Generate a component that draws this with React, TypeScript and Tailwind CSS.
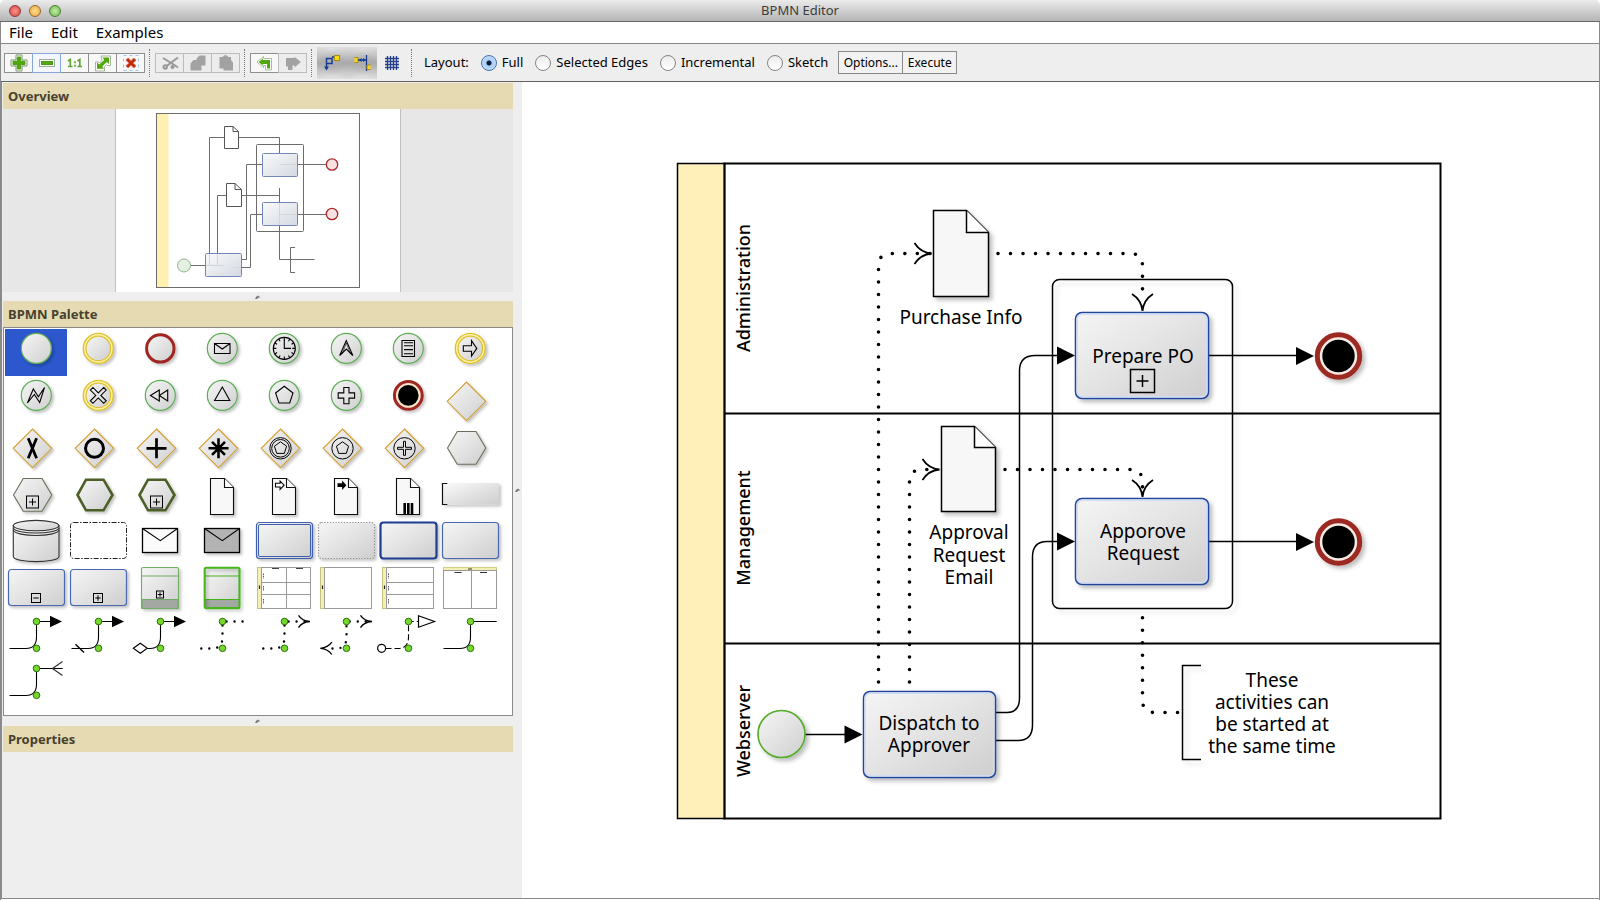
import { useState } from "react";
import type { ReactNode } from "react";

/* ---------- shared drawing parts ---------- */

function SharedDefs() {
  return (
    <svg className="absolute h-0 w-0" aria-hidden="true">
      <defs>
        <linearGradient id="face" x1="0" y1="0" x2="1" y2="1">
          <stop offset="0" stopColor="#f5f5f5" />
          <stop offset="0.45" stopColor="#e5e5e5" />
          <stop offset="1" stopColor="#cecece" />
        </linearGradient>
        <linearGradient id="faceFade" x1="0" y1="0" x2="1" y2="1">
          <stop offset="0" stopColor="#fafafa" />
          <stop offset="1" stopColor="#cdcdcd" />
        </linearGradient>
        <linearGradient id="mini" x1="0" y1="0" x2="1" y2="1">
          <stop offset="0" stopColor="#fafafa" />
          <stop offset="1" stopColor="#d3d9e2" />
        </linearGradient>
        <filter id="shadow" x="-20%" y="-20%" width="150%" height="150%">
          <feDropShadow dx="3" dy="3" stdDeviation="2" floodColor="#000" floodOpacity="0.26" />
        </filter>
        <filter id="softShadow" x="-20%" y="-20%" width="150%" height="150%">
          <feDropShadow dx="4" dy="4" stdDeviation="2" floodColor="#000" floodOpacity="0.12" />
        </filter>
        <filter id="smallShadow" x="-20%" y="-20%" width="160%" height="160%">
          <feDropShadow dx="2" dy="2" stdDeviation="1.4" floodColor="#000" floodOpacity="0.24" />
        </filter>
      </defs>
    </svg>
  );
}

type Pt = { x: number; y: number };

function OpenArrow({ x, y, angle = 0 }: Pt & { angle?: number }) {
  return (
    <path
      transform={`translate(${x} ${y}) rotate(${angle})`}
      d="M-17 -10.5 Q-11 -1 0 0 Q-11 1 -17 10.5"
      fill="none"
      stroke="#000"
      strokeWidth="1.8"
    />
  );
}

function SolidArrow({ x, y }: Pt) {
  return <path d={`M${x} ${y} l-18 -9 v18 Z`} fill="#000" />;
}

function Task({ x, y, w, h }: Pt & { w: number; h: number }) {
  return (
    <g>
      <rect x={x} y={y} width={w} height={h} rx="6.5" fill="url(#face)" stroke="#21449c" strokeWidth="1.5" filter="url(#shadow)" />
      <rect x={x + 1.7} y={y + 1.7} width={w - 3.4} height={h - 3.4} rx="5" fill="none" stroke="#cfdef6" strokeWidth="1.4" />
    </g>
  );
}

function Document({ x, y, w, h, fold }: Pt & { w: number; h: number; fold: number }) {
  return (
    <g stroke="#000" strokeWidth="1.5" strokeLinejoin="miter">
      <path d={`M${x} ${y} h${w - fold} l${fold} ${fold} v${h - fold} h${-w} Z`} fill="#f7f7f7" filter="url(#shadow)" />
      <path d={`M${x + w - fold} ${y} v${fold} h${fold}`} fill="#fff" />
    </g>
  );
}

function EndEvent({ x, y }: Pt) {
  return (
    <g>
      <circle cx={x} cy={y} r="21.2" fill="#f7e9e4" stroke="#9c2a20" strokeWidth="5" filter="url(#shadow)" />
      <circle cx={x} cy={y} r="16.2" fill="#000" />
    </g>
  );
}

function Label({ x, lines }: { x: number; lines: [string, number][] }) {
  return (
    <>
      {lines.map(([text, y]) => (
        <text key={text} x={x} y={y} textAnchor="middle" className="fill-black text-[19px]">
          {text}
        </text>
      ))}
    </>
  );
}

function LaneLabel({ y, text }: { y: number; text: string }) {
  return (
    <text transform={`translate(750 ${y}) rotate(-90)`} textAnchor="middle" className="fill-black text-[18px] font-medium">
      {text}
    </text>
  );
}

/* ---------- diagram canvas ---------- */

function Diagram() {
  return (
    <svg width="1076" height="814" viewBox="522 83 1076 814" className="block" role="img" aria-label="Purchase approval process">
      <rect x="677.5" y="163.5" width="47" height="655" fill="#fff0b9" stroke="#000" strokeWidth="1.5" />
      <rect x="724.5" y="163.5" width="716" height="655" fill="none" stroke="#000" strokeWidth="2" />
      <path d="M724.5 413.5 H1440.5 M724.5 643.5 H1440.5" stroke="#000" strokeWidth="2" />

      <LaneLabel y={288} text="Administration" />
      <LaneLabel y={528} text="Management" />
      <LaneLabel y={731} text="Webserver" />

      <rect x="1052.5" y="279.5" width="180" height="329" rx="7" fill="none" stroke="#000" strokeWidth="1.5" filter="url(#softShadow)" />

      <g fill="none" stroke="#000" strokeWidth="3.6" strokeLinecap="round" strokeDasharray="0 12.5">
        <path d="M878.5 682 V266 Q878.5 253.5 891 253.5 H931" />
        <path d="M909.5 682 V482 Q909.5 469.5 922 469.5 H938" />
        <path d="M998 253.5 H1130 Q1142.5 253.5 1142.5 266 V300" />
        <path d="M1005 469.5 H1130 Q1142.5 469.5 1142.5 482 V490" />
        <path d="M1142.5 617.7 V700 Q1142.5 712.5 1155 712.5 H1181" />
      </g>

      <g fill="none" stroke="#000" strokeWidth="1.5">
        <path d="M805 734.5 H848" />
        <path d="M996 712.5 H1007 Q1019.5 712.5 1019.5 698 V371 Q1019.5 355.5 1035 355.5 H1060" />
        <path d="M996 740.5 H1018 Q1032.5 740.5 1032.5 725 V557 Q1032.5 541.5 1047 541.5 H1060" />
        <path d="M1209 355.5 H1300 M1209 541.5 H1300" />
      </g>

      <Task x={1075.5} y={312.5} w={133} h={86} />
      <Task x={1075.5} y={498.5} w={133} h={86} />
      <Task x={863.5} y={691.5} w={132} h={86} />

      <circle cx="781.5" cy="734" r="23.5" fill="url(#face)" stroke="#52ab25" strokeWidth="1.6" filter="url(#shadow)" />
      <EndEvent x={1338.5} y={356} />
      <EndEvent x={1338.5} y={542} />

      <Document x={933.5} y={210.5} w={55} h={86} fold={22} />
      <Document x={941.5} y={426.5} w={54} h={85} fold={21} />

      <SolidArrow x={1075} y={355.5} />
      <SolidArrow x={1075} y={541.5} />
      <SolidArrow x={1314} y={356} />
      <SolidArrow x={1314} y={542} />
      <SolidArrow x={862.5} y={734.5} />
      <OpenArrow x={931.5} y={253.5} />
      <OpenArrow x={939.5} y={469.5} />
      <OpenArrow x={1142.5} y={311} angle={90} />
      <OpenArrow x={1142.5} y={497} angle={90} />

      <g fill="none" stroke="#000" strokeWidth="1.5">
        <rect x="1130.5" y="369.5" width="24" height="23" />
        <path d="M1136.5 381 h12 M1142.5 375 v12" />
        <path d="M1201 665.5 H1182.5 V759.5 H1201" filter="url(#softShadow)" />
      </g>

      <Label x={961} lines={[["Purchase Info", 324]]} />
      <Label x={969} lines={[["Approval", 539], ["Request", 562], ["Email", 584]]} />
      <Label x={1143} lines={[["Prepare PO", 363]]} />
      <Label x={1143} lines={[["Apporove", 538], ["Request", 560]]} />
      <Label x={929} lines={[["Dispatch to", 730], ["Approver", 752]]} />
      <Label x={1272} lines={[["These", 687], ["activities can", 709], ["be started at", 731], ["the same time", 753]]} />
    </svg>
  );
}

/* ---------- overview thumbnail ---------- */

function Overview() {
  return (
    <div className="border-x border-[#c0c0c0] bg-white">
      <svg width="284" height="183" viewBox="116 109 284 183" className="block" role="img" aria-label="Diagram overview">
        <rect x="157" y="114" width="11.5" height="173" fill="#fdf0b0" />
        <g fill="none" stroke="#6c6c6c" strokeWidth="1">
          <rect x="156.5" y="113.5" width="203" height="174" />
          <rect x="256.5" y="144.5" width="47" height="87" rx="1" />
          <path d="M224 137.5 H209.5 V254 M238.5 137.5 H279.5 V153 M226 195.5 H217.5 V254 M241.5 195.5 H279.5 M279.5 188 V202" />
          <path d="M190 265.5 H205 M241.5 259.5 H246.5 V164.5 H262 M241.5 267.5 H250.5 V214.5 H262 M298 164.5 H327 M298 214.5 H327" />
          <path d="M279.5 226 V259.5 H314.5 M295 247.5 H290.5 V272.5 H295" />
        </g>
        <g fill="url(#mini)" stroke="#7386b8" strokeWidth="1">
          <rect x="262.5" y="153.5" width="35" height="23" rx="1" />
          <rect x="262.5" y="202.5" width="35" height="23" rx="1" />
          <rect x="205.5" y="253.5" width="36" height="23" rx="1" />
        </g>
        <g fill="none" stroke="#d2d5da" strokeWidth="1">
          <path d="M279.5 164.5 H297 M279.5 214.5 H297 M279.5 203 V225 M209.5 254 V265 M217.5 254 V265 M206 265.5 H224 M233 267.5 H241" />
        </g>
        <g fill="#fff" stroke="#555" strokeWidth="1">
          <path d="M224.5 126.5 h8.5 l5.5 5 v17 h-14 Z M233 126.5 v5 h5.5" />
          <path d="M226.5 183.5 h8.5 l6.5 6 v17 h-15 Z M235 183.5 v6 h6.5" />
        </g>
        <circle cx="184" cy="265.5" r="6.5" fill="#e3f0e2" stroke="#8fb48d" />
        <circle cx="332" cy="164.5" r="5.7" fill="#f6e2e2" stroke="#b3262b" strokeWidth="1.3" />
        <circle cx="332" cy="214" r="5.7" fill="#f6e2e2" stroke="#b3262b" strokeWidth="1.3" />
      </svg>
    </div>
  );
}

/* ---------- palette glyphs, drawn in a 62 x 47 cell ---------- */

const C = { x: 31.3, y: 19.4 };

function Ring({ kind, children }: { kind: "start" | "inter" | "end"; children?: ReactNode }) {
  return (
    <>
      {kind === "start" && <circle cx={C.x} cy={C.y} r="15" fill="url(#face)" stroke="#5fae57" strokeWidth="1.2" filter="url(#smallShadow)" />}
      {kind === "inter" && (
        <>
          <circle cx={C.x} cy={C.y} r="15" fill="#fbf4a8" stroke="#dfc030" strokeWidth="1.4" filter="url(#smallShadow)" />
          <circle cx={C.x} cy={C.y} r="12.3" fill="url(#face)" stroke="#dfc030" strokeWidth="1.2" />
        </>
      )}
      {kind === "end" && <circle cx={C.x} cy={C.y} r="13.7" fill="url(#face)" stroke="#9f2823" strokeWidth="3" filter="url(#smallShadow)" />}
      <g fill="none" stroke="#000" strokeWidth="1.1">{children}</g>
    </>
  );
}

function Diamond({ children }: { children?: ReactNode }) {
  return (
    <>
      <path d="M27.5 6 L46.8 25.3 L27.5 44.6 L8.2 25.3 Z" fill="url(#face)" stroke="#d2a031" strokeWidth="1.1" filter="url(#smallShadow)" />
      <g fill="none" stroke="#000">{children}</g>
    </>
  );
}

function Hexagon({ thick, marker }: { thick?: boolean; marker?: boolean }) {
  return (
    <>
      {thick ? (
        <path d="M10.5 25 L19 9.7 H36.5 L45.5 25 L36.5 40.3 H19 Z" fill="url(#face)" stroke="#4b5f26" strokeWidth="2.6" filter="url(#smallShadow)" />
      ) : (
        <path d="M8.5 25 L18.3 8.5 H37 L46.8 25 L37 41.3 H18.3 Z" fill="url(#face)" stroke="#66705a" strokeWidth="1.1" filter="url(#smallShadow)" />
      )}
      {marker && <Marker x={27.5} y={32} s={12} />}
    </>
  );
}

function Marker({ x, y, s, minus }: Pt & { s: number; minus?: boolean }) {
  const h = s / 2;
  const a = s / 4 + 0.5;
  return (
    <g fill="none" stroke="#000" strokeWidth="1">
      <rect x={x - h} y={y - h} width={s} height={s} />
      <path d={`M${x - a} ${y} h${2 * a}`} />
      {!minus && <path d={`M${x} ${y - a} v${2 * a}`} />}
    </g>
  );
}

function Doc({ children }: { children?: ReactNode }) {
  return (
    <>
      <path d="M19.5 8.5 H33.5 L42.5 17.5 V44.5 H19.5 Z" fill="#f8f8f8" stroke="#111" strokeWidth="1.1" filter="url(#smallShadow)" />
      <path d="M33.5 8.5 V17.5 H42.5" fill="#fff" stroke="#111" strokeWidth="1.1" />
      {children}
    </>
  );
}

function Card({ stroke, width = 1.2, dash, fill = "url(#face)" }: { stroke: string; width?: number; dash?: string; fill?: string }) {
  return (
    <rect x="3.5" y="5.5" width="56" height="36" rx="3" fill={fill} stroke={stroke} strokeWidth={width} strokeDasharray={dash} filter={fill === "#fff" ? undefined : "url(#smallShadow)"} />
  );
}

function Envelope({ fill }: { fill: string }) {
  return (
    <>
      <rect x="13.5" y="11.5" width="35" height="24" fill={fill} stroke="#000" strokeWidth="1.3" filter="url(#smallShadow)" />
      <path d="M13.5 11.5 L31.3 23.7 L48.5 11.5" fill="none" stroke="#000" strokeWidth="1.1" />
    </>
  );
}

function Nodes() {
  return (
    <g fill="#76d82c" stroke="#2f6f10" strokeWidth="1">
      <circle cx="31.5" cy="10.5" r="3.3" />
      <circle cx="31.5" cy="37.3" r="3.3" />
    </g>
  );
}

function Wire({ dash, from = 4.5, to = 46, width = 1.1, round }: { dash?: string; from?: number; to?: number; width?: number; round?: boolean }) {
  return (
    <path
      d={`M${from} 37.5 H21 Q31.5 37.5 31.5 26 V10.5 H${to}`}
      fill="none"
      stroke="#000"
      strokeWidth={width}
      strokeDasharray={dash}
      strokeLinecap={round ? "round" : "butt"}
    />
  );
}

const TIP = "M45 4.8 L57 10.5 L45 16.2 Z";
const OPEN_TIP = "M45.5 4.3 Q49 10 57 10.5 Q49 11 45.5 16.7";
const PENTAGON = "M31.3 10.3 L40 17 L36.7 27 H26 L22.6 17 Z";

function Pool({ columns, rows }: { columns?: boolean; rows?: boolean }) {
  const left = rows && columns ? 4.5 : 5.5;
  return (
    <g strokeWidth="1">
      <rect x={left} y="3.5" width="4" height="41" fill="#f5efb4" stroke="#c9c27e" />
      <rect x={left + 4} y="3.5" width={columns ? 49 : 47} height="41" fill="#fff" stroke="#9a9a9a" />
      {rows && <path d={`M${left + 4} 18.5 h${columns ? 49 : 47} M${left + 4} 30.5 h${columns ? 49 : 47}`} stroke="#9a9a9a" />}
      {columns && <path d="M33.5 3.5 V44.5" stroke="#9a9a9a" />}
      {columns && <path d="M19 4.5 h7 M43 4.5 h7" stroke="#444" />}
      {rows && <path d={`M${left + 6} 9.5 v5 M${left + 6} 22 v5 M${left + 6} 35 v5`} stroke="#555" strokeDasharray="1.5 0.8" />}
      <path d={`M${left + 2} 21.5 v3.5`} stroke="#222" strokeWidth="1.2" />
    </g>
  );
}

const PALETTE: [string, ReactNode][] = [
  ["Start event", <Ring kind="start" />],
  ["Intermediate event", <Ring kind="inter" />],
  ["End event", <Ring kind="end" />],
  ["Message event", <Ring kind="start"><path d="M23.5 14.5 h15.5 v10 h-15.5 Z l7.8 5.5 l7.7 -5.5" /></Ring>],
  ["Timer event", (
    <Ring kind="start">
      <circle cx="31.3" cy="19.4" r="11" />
      <path d="M31.3 11 V19.4 H38" />
      <path d="M31.3 8.4 v3 M31.3 27.4 v3 M20.3 19.4 h3 M42.3 19.4 h-3 M25.8 9.9 l1.3 2.3 M36.8 9.9 l-1.3 2.3 M25.8 28.9 l1.3 -2.3 M36.8 28.9 l-1.3 -2.3 M21.8 13.9 l2.3 1.3 M40.8 13.9 l-2.3 1.3 M21.8 24.9 l2.3 -1.3 M40.8 24.9 l-2.3 -1.3" />
    </Ring>
  )],
  ["Escalation event", <Ring kind="start"><path d="M31.3 11.5 L24.7 26.5 L31.3 20 L37.8 26.5 Z" /><path d="M31.3 14 L27 25 M31.3 14 L35.6 25" strokeWidth="0.6" /></Ring>],
  ["Rule event", <Ring kind="start"><path d="M25 11.5 h12.5 v16 h-12.5 Z M27 13.8 h9 M27 16.8 h9 M27 20.6 h9 M27 24.8 h9" /></Ring>],
  ["Link event", <Ring kind="inter"><path d="M24.3 16.7 H32.5 V11.6 L37.8 19.4 L32.5 27 V22.3 H24.3 Z" /></Ring>],

  ["Error event", <Ring kind="start"><path d="M22.4 27 L28.3 13 L33.4 20.7 L39.5 11.5 L34.7 26.5 L29.3 18.5 Z" /></Ring>],
  ["Cancel event", <Ring kind="inter"><path transform="rotate(45 31.3 19.4)" d="M29.5 10 h3.6 v7.6 h7.6 v3.6 h-7.6 v7.6 h-3.6 v-7.6 h-7.6 v-3.6 h7.6 Z" /></Ring>],
  ["Compensation event", <Ring kind="start"><path d="M30.3 14 L21.5 19.5 L30.3 25 Z M38.7 14 L30.3 19.5 L38.7 25 Z" /></Ring>],
  ["Signal event", <Ring kind="start"><path d="M31.3 11 L38.8 24.5 H23.6 Z" /></Ring>],
  ["Multiple event", <Ring kind="start"><path d={PENTAGON} /></Ring>],
  ["Parallel event", <Ring kind="start"><path d="M28.8 11.5 h5.2 v5.4 h5.6 v5.2 h-5.6 v5.6 h-5.2 v-5.6 h-5.6 v-5.2 h5.6 Z" /></Ring>],
  ["Terminate event", (
    <>
      <circle cx={C.x} cy={C.y} r="13.9" fill="#f9e6c8" stroke="#9f2823" strokeWidth="3" filter="url(#smallShadow)" />
      <circle cx={C.x} cy={C.y} r="10.3" fill="#000" />
    </>
  )],
  ["Gateway", <Diamond />],

  ["Exclusive gateway", <Diamond><path d="M23.2 15.3 L31.6 35.3 M31.6 15.3 L23.2 35.3" strokeWidth="2.8" /></Diamond>],
  ["Inclusive gateway", <Diamond><circle cx="27.5" cy="25.3" r="9" strokeWidth="3" /></Diamond>],
  ["Parallel gateway", <Diamond><path d="M27.5 15.3 v20 M17.5 25.3 h20" strokeWidth="2.7" /></Diamond>],
  ["Complex gateway", <Diamond><path d="M27.5 15.3 v20 M17.5 25.3 h20 M21 18.8 l13 13 M34 18.8 l-13 13" strokeWidth="2.6" /></Diamond>],
  ["Event gateway", (
    <Diamond>
      <circle cx="27.5" cy="25.3" r="10.7" />
      <circle cx="27.5" cy="25.3" r="8.8" />
      <path d="M27.5 18.8 L33.6 23.2 L31.3 30.4 H23.7 L21.4 23.2 Z" />
    </Diamond>
  )],
  ["Exclusive event gateway", (
    <Diamond>
      <circle cx="27.5" cy="25.3" r="10.7" />
      <path d="M27.5 18.8 L33.6 23.2 L31.3 30.4 H23.7 L21.4 23.2 Z" />
    </Diamond>
  )],
  ["Parallel event gateway", (
    <Diamond>
      <circle cx="27.5" cy="25.3" r="10.7" />
      <path d="M26.5 18.3 h2 v6 h6 v2 h-6 v6 h-2 v-6 h-6 v-2 h6 Z" />
    </Diamond>
  )],
  ["Conversation", <Hexagon />],

  ["Sub conversation", <Hexagon marker />],
  ["Call conversation", <Hexagon thick />],
  ["Call sub conversation", <Hexagon thick marker />],
  ["Data object", <Doc />],
  ["Data input", <Doc><path d="M22.5 13.3 h4.6 v-2.3 l4 4.2 l-4 4.2 v-2.4 h-4.6 Z" fill="#fff" stroke="#000" strokeWidth="1.1" /></Doc>],
  ["Data output", <Doc><path d="M22.5 13.3 h4.6 v-2.8 l4.3 4.7 l-4.3 4.7 v-2.9 h-4.6 Z" fill="#000" /></Doc>],
  ["Data collection", <Doc><path d="M27.7 33 v11 M31.3 33 v11 M35 33 v11" stroke="#000" strokeWidth="2.6" /></Doc>],
  ["Annotation", (
    <>
      <rect x="3.5" y="13" width="56.5" height="21.5" rx="1" fill="url(#faceFade)" filter="url(#smallShadow)" />
      <path d="M8.3 13.5 H3.5 V34.5 H8.3" fill="none" stroke="#111" strokeWidth="1.2" />
    </>
  )],

  ["Data store", (
    <g fill="url(#face)" stroke="#333" strokeWidth="1.1">
      <path d="M8.3 8.5 V39.5 C8.3 46.3 54 46.3 54 39.5 V8.5 Z" filter="url(#smallShadow)" />
      <ellipse cx="31.1" cy="8.6" rx="22.8" ry="5.2" />
      <path d="M8.3 10.8 C10 17.8 52 17.8 54 10.8 M8.3 13.2 C10 20.2 52 20.2 54 13.2" fill="none" />
    </g>
  )],
  ["Group", <Card stroke="#222" fill="#fff" width={1} dash="5 1.5 1.5 1.5" />],
  ["Message", <Envelope fill="#fbfbfb" />],
  ["Reply message", <Envelope fill="#b3b3b3" />],
  ["Transaction", <><Card stroke="#3f5fae" /><rect x="5.5" y="7.5" width="52" height="32" rx="1.5" fill="none" stroke="#3f5fae" /></>],
  ["Event sub process", <Card stroke="#8c8c8c" width={1.2} dash="1.2 1.6" />],
  ["Call activity", <Card stroke="#1f3d92" width={2.2} />],
  ["Task", <Card stroke="#4a68b2" />],

  ["Expanded sub process", <><Card stroke="#4a68b2" /><Marker x={31} y={34} s={9} minus /></>],
  ["Collapsed sub process", <><Card stroke="#4a68b2" /><Marker x={31} y={34} s={9} /></>],
  ["Choreography", (
    <g stroke="#6fae62" strokeWidth="1.1">
      <rect x="12.5" y="3.5" width="37" height="41" rx="1.5" fill="url(#face)" filter="url(#smallShadow)" />
      <path d="M13 35.5 h36 v9 h-36 Z" fill="#a3a8a3" />
      <path d="M13 12 H49.5" />
      <Marker x={31} y={30.5} s={7} />
    </g>
  )],
  ["Call choreography", (
    <g stroke="#46b51d">
      <path d="M14 4 h34 v40 h-34 Z" fill="url(#face)" stroke="none" />
      <path d="M14 35.5 h34.5 v8.5 h-34.5 Z" fill="#a3a8a3" strokeWidth="1" />
      <path d="M14 12 H48" strokeWidth="1" />
      <rect x="13.7" y="3.8" width="34.8" height="40.3" rx="1.5" fill="none" strokeWidth="2.1" filter="url(#smallShadow)" />
    </g>
  )],
  ["Pool with lanes and columns", <Pool rows columns />],
  ["Pool", <Pool />],
  ["Pool with lanes", <Pool rows />],
  ["Vertical pool", (
    <g strokeWidth="1">
      <rect x="4.5" y="3.5" width="53" height="3" fill="#f5efb4" stroke="#d3cc86" />
      <rect x="4.5" y="6.5" width="53" height="38" fill="#fff" stroke="#9a9a9a" />
      <path d="M32.5 6.5 V44.5" stroke="#9a9a9a" />
      <path d="M29 5 h4 M15.5 8.5 h7 M41 8.5 h7" stroke="#333" />
    </g>
  )],

  ["Sequence flow", <><Wire /><path d={TIP} /><Nodes /></>],
  ["Default flow", <><Wire /><path d="M8.5 33.3 L17 41.5" stroke="#000" strokeWidth="1.4" /><path d={TIP} /><Nodes /></>],
  ["Conditional flow", <><Wire from={18} /><path d="M4.3 37.3 L11.3 32.3 L18.3 37.3 L11.3 42.3 Z" fill="#fff" stroke="#000" strokeWidth="1.1" /><path d={TIP} /><Nodes /></>],
  ["Association", <><Wire from={10.3} to={56} dash="0 8" width={2.4} round /><Nodes /></>],
  ["Directed association", <><Wire from={10.3} to={53} dash="0 8" width={2.4} round /><path d={OPEN_TIP} fill="none" stroke="#000" strokeWidth="1.3" /><Nodes /></>],
  ["Bidirected association", (
    <>
      <Wire from={17.5} to={53} dash="0 8" width={2.4} round />
      <path d={OPEN_TIP} fill="none" stroke="#000" strokeWidth="1.3" />
      <path d="M16.8 31.2 Q13 36.8 5.3 37.3 Q13 37.8 16.8 43.5" fill="none" stroke="#000" strokeWidth="1.3" />
      <Nodes />
    </>
  )],
  ["Message flow", (
    <>
      <Wire from={8.5} to={41} dash="6 3" />
      <circle cx="4.6" cy="37.3" r="4" fill="#fff" stroke="#000" strokeWidth="1.2" />
      <path d="M41.5 4.8 L57.5 10.5 L41.5 16.2 Z" fill="#fff" stroke="#000" strokeWidth="1.2" />
      <Nodes />
    </>
  )],
  ["Conversation link", <><Wire to={57.7} /><Nodes /></>],

  ["Forked conversation link", <><Wire to={57.7} /><path d="M57.5 3.5 L47.5 10.5 L57.5 17.5" fill="none" stroke="#333" strokeWidth="1.2" /><Nodes /></>],
];

function Palette() {
  const [selected, setSelected] = useState(0);
  return (
    <div className="grid grid-cols-[repeat(8,62px)] border border-[#8a8a8a] bg-white px-px pt-px pb-2.5">
      {PALETTE.map(([name, glyph], i) => (
        <button
          key={name}
          type="button"
          aria-label={name}
          aria-pressed={i === selected}
          onClick={() => setSelected(i)}
          className={i === selected ? "h-[47px] bg-[#2c57cd]" : "h-[47px]"}
        >
          <svg width="62" height="47" viewBox="0 0 62 47" className="block overflow-visible">{glyph}</svg>
        </button>
      ))}
    </div>
  );
}

/* ---------- toolbar ---------- */

function ToolGroup({ items }: { items: { name: string; icon: ReactNode; disabled?: boolean; hot?: boolean }[] }) {
  return (
    <div className="flex">
      {items.map(({ name, icon, disabled, hot }) => (
        <button
          key={name}
          type="button"
          aria-label={name}
          disabled={disabled}
          className={
            hot
              ? "z-10 -ml-px flex h-5 w-[29px] items-center justify-center border border-[#86a6d8] bg-[#f3f7fd] first:ml-0"
              : disabled
                ? "-ml-px flex h-5 w-[29px] items-center justify-center border border-[#bcbcbc] bg-[#ececec] first:ml-0"
                : "-ml-px flex h-5 w-[29px] items-center justify-center border border-[#8f8f8f] bg-[#f8f8f8] first:ml-0"
          }
        >
          <svg width="18" height="18" viewBox="0 0 18 18" className="block">{icon}</svg>
        </button>
      ))}
    </div>
  );
}

function Separator() {
  return <div className="mr-[5px] ml-1 h-7 border-l border-dotted border-[#777]" />;
}

const outlined = { stroke: "#4d9a17", strokeWidth: 1 };
const grey = { fill: "#a2a2a2" };

const ZOOM_TOOLS = [
  { name: "Zoom in", icon: <><path d="M6 1 h6 v5 h5 v6 h-5 v5 h-6 v-5 h-5 v-6 h5 Z" fill="#fff" stroke="#7f9673" strokeWidth="1" /><path d="M7.3 3 h3.4 v4.3 h4.3 v3.4 h-4.3 v4.3 h-3.4 v-4.3 h-4.3 v-3.4 h4.3 Z" fill="#4fa90c" {...outlined} /></> },
  { name: "Zoom out", hot: true, icon: <><rect x="1.5" y="5.5" width="15" height="7" fill="#fff" stroke="#9bb28d" /><rect x="3.5" y="7.5" width="11" height="3" fill="#4fa90c" {...outlined} /></> },
  { name: "Zoom 1:1", icon: <path d="M2 7 L4.3 5.5 V13 M2 12.5 H6.5 M11.5 7 L13.8 5.5 V13 M11.5 12.5 H16 M9 7.2 v2 M9 10.8 v2" fill="none" stroke="#62a636" strokeWidth="1.7" /> },
  { name: "Fit content", icon: <><path d="M7 2 h9.5 v9.5 h-3 l-1 -1 l-2 2 v4.5 h-9 v-9 h3 l1 1 l2.5 -2.5 Z" fill="#fff" stroke="#8fa583" strokeWidth="0.8" /><path d="M8.5 3.5 h6.5 v6.5 l-2.2 -2 l-4.6 4.6 l1.8 2.2 h-7 v-6.3 l2.2 2 l5 -4.6 Z" fill="#4fa90c" /></> },
  { name: "Delete", icon: <><path d="M1.5 1.5 h15 v15 h-15 Z" fill="none" stroke="#9ec4ee" strokeDasharray="3 3" /><path d="M5 5 L13 13 M13 5 L5 13" stroke="#f3c3bc" strokeWidth="4.4" /><path d="M5 5 L13 13 M13 5 L5 13" stroke="#c22a0c" strokeWidth="3" /></> },
];

const EDIT_TOOLS = [
  { name: "Cut", disabled: true, icon: <g fill="none" stroke="#989898" strokeWidth="2"><path d="M2 4 L11 9.5 L17 13.5 M17 3.5 L9 9.5 L5.5 12" /><circle cx="4.2" cy="13" r="1.7" /><circle cx="11.5" cy="13" r="1" /></g> },
  { name: "Copy", disabled: true, icon: <path d="M7.5 4.5 l3 -3 h6 v10 h-4 v5 h-11 v-7 l3 -3.5 h3 Z" {...grey} /> },
  { name: "Paste", disabled: true, icon: <path d="M2.5 3 h3 l2 -1.8 h2 l2 1.8 h2.5 v3 l2 2.5 v8 h-9.5 v-2 h-4 Z" {...grey} /> },
];

const HISTORY_TOOLS = [
  { name: "Undo", icon: <><path d="M1 8 L7.5 2.5 V4.5 H15.5 V16 H9.5 V11.5 H7.5 V13.5 Z" fill="#fff" stroke="#93ad86" strokeWidth="0.8" /><path d="M2.7 8 L6.8 4.5 V6 H14 V14.5 H11 V10 H6.8 V11.5 Z" fill="#4fa90c" /></> },
  { name: "Redo", disabled: true, icon: <path d="M16.8 8 L10.5 2.8 V4 H2 V12.5 H4 V16 H8.5 V11.5 H10.5 V13.5 Z" {...grey} /> },
];

function Toggle({ name, children }: { name: string; children: ReactNode }) {
  return (
    <button type="button" aria-label={name} aria-pressed="true" className="flex h-8 w-[30px] items-center justify-center bg-[radial-gradient(ellipse_at_left,#b5b5b5,#eeeeee_70%),radial-gradient(ellipse_at_right,#b5b5b5,#eeeeee_70%)] bg-blend-multiply">
      <svg width="18" height="18" viewBox="0 0 18 18" className="block">{children}</svg>
    </button>
  );
}

const LAYOUTS = ["Full", "Selected Edges", "Incremental", "Sketch"];

function Toolbar() {
  const [layout, setLayout] = useState("Full");
  return (
    <div className="flex h-[38px] shrink-0 items-center border-b border-[#626262] bg-[#eeeeee] pl-[3px]">
      <ToolGroup items={ZOOM_TOOLS} />
      <Separator />
      <ToolGroup items={EDIT_TOOLS} />
      <Separator />
      <ToolGroup items={HISTORY_TOOLS} />
      <Separator />
      <div className="flex items-center">
        <Toggle name="Orthogonal edges">
          <path d="M3.5 4.5 h5.5 v5 h-5.5 Z M9 3 H12 M3.5 9.5 V15" fill="none" stroke="#173c96" strokeWidth="1.5" />
          <path d="M1 12.5 h5 l-2.5 4 Z" fill="#173c96" />
          <rect x="11.5" y="1.5" width="5" height="5" fill="#fbd80e" stroke="#a58d12" />
        </Toggle>
        <Toggle name="Snap lines">
          <path d="M1.5 3.5 h3.5 v5 h-3.5" fill="#fbd80e" stroke="#a58d12" />
          <path d="M5 6 H13 M13.5 1 V17" fill="none" stroke="#173c96" strokeWidth="1.3" />
          <path d="M8.5 4 v4 l-2.5 -2 Z M10 4 v4 l2.5 -2 Z" fill="#173c96" />
          <path d="M17.5 11 h-3.5 v4.5 h3.5" fill="#fbd80e" stroke="#a58d12" />
        </Toggle>
        <button type="button" aria-label="Grid" className="flex h-8 w-[30px] items-center justify-center">
          <svg width="14" height="14" viewBox="0 0 14 14" className="block">
            <path d="M2.5 0 V14 M5.5 0 V14 M8.5 0 V14 M11.5 0 V14 M0 2.5 H14 M0 5.5 H14 M0 8.5 H14 M0 11.5 H14" stroke="#25408c" strokeWidth="1.3" />
          </svg>
        </button>
      </div>
      <Separator />
      <fieldset className="ml-[7px] flex items-center gap-3 text-[13px] text-black">
        <span>Layout:</span>
        {LAYOUTS.map((name) => (
          <label key={name} className="flex items-center gap-[5px] whitespace-nowrap">
            <input
              type="radio"
              name="layout"
              checked={layout === name}
              onChange={() => setLayout(name)}
              className="h-4 w-4 appearance-none rounded-full border border-[#858585] bg-linear-to-b from-[#ececec] to-white checked:border-[#4a6fae] checked:bg-[radial-gradient(circle_at_center,#0c1c3c_0_2px,#a9cdf6_3px,#cfe6ff_100%)]"
            />
            {name}
          </label>
        ))}
      </fieldset>
      <div className="ml-2.5 flex text-[12px] text-black">
        <button type="button" className="h-[23px] w-[65px] border border-[#8a8a8a] bg-[#f2f2f2]">Options...</button>
        <button type="button" className="-ml-px h-[23px] w-[55px] border border-[#8a8a8a] bg-[#f2f2f2]">Execute</button>
      </div>
    </div>
  );
}

/* ---------- window ---------- */

function PanelTitle({ children }: { children: string }) {
  return <h2 className="flex h-[26px] items-center bg-[#e5dab1] pt-0.5 pl-[5px] text-[13px] font-bold text-[#47412f]">{children}</h2>;
}

function Grip() {
  return (
    <svg width="6" height="4" viewBox="0 0 6 4" className="block" aria-hidden="true">
      <path d="M0 4 Q1 1 3 0.5 L5.5 2.5 H3.5 L2 4 Z" fill="#777" />
    </svg>
  );
}

export default function App() {
  return (
    <div className="flex min-h-screen flex-col bg-white font-['Noto_Sans',sans-serif] text-black">
      <SharedDefs />
      <header className="relative flex h-[22px] shrink-0 items-center justify-center rounded-t-[5px] border-b border-[#666] bg-linear-to-b from-[#ebebeb] to-[#b5b5b5] pt-px">
        <div className="absolute left-[9px] flex gap-2">
          <button type="button" aria-label="Close" className="h-3 w-3 rounded-full border border-[#8e3a35] bg-radial from-[#f9948c] to-[#d8403a]" />
          <button type="button" aria-label="Minimize" className="h-3 w-3 rounded-full border border-[#9a6a2c] bg-radial from-[#fde08c] to-[#eba33c]" />
          <button type="button" aria-label="Zoom" className="h-3 w-3 rounded-full border border-[#4d7f3a] bg-radial from-[#c2eda4] to-[#6db84a]" />
        </div>
        <h1 className="text-[13px] text-[#3c3c3c]">BPMN Editor</h1>
      </header>

      <div className="flex flex-1 flex-col border-x border-[#8a8a8a]">
        <nav className="flex h-[22px] shrink-0 items-center gap-[18px] border-b border-[#868686] bg-white pb-0.5 pl-2 text-[15px] leading-5">
          <button type="button">File</button>
          <button type="button">Edit</button>
          <button type="button">Examples</button>
        </nav>
        <Toolbar />

        <main className="flex flex-1 border-l border-[#8a8a8a]">
          <aside className="flex w-[511px] shrink-0 flex-col bg-[#eeeeee] pt-px pl-px">
            <PanelTitle>Overview</PanelTitle>
            <div className="flex justify-center bg-[#e7e7e7]">
              <Overview />
            </div>
            <div className="flex h-[9px] items-center justify-center"><Grip /></div>
            <PanelTitle>BPMN Palette</PanelTitle>
            <Palette />
            <div className="flex h-2.5 items-center justify-center"><Grip /></div>
            <PanelTitle>Properties</PanelTitle>
            <div className="flex-1" />
          </aside>
          <div className="flex w-[9px] shrink-0 items-center justify-center bg-[#eeeeee]"><Grip /></div>
          <section className="min-w-0 flex-1 overflow-hidden bg-white pt-px">
            <Diagram />
          </section>
        </main>
        <footer className="h-0.5 shrink-0 border-t border-[#8a8a8a]" />
      </div>
    </div>
  );
}
